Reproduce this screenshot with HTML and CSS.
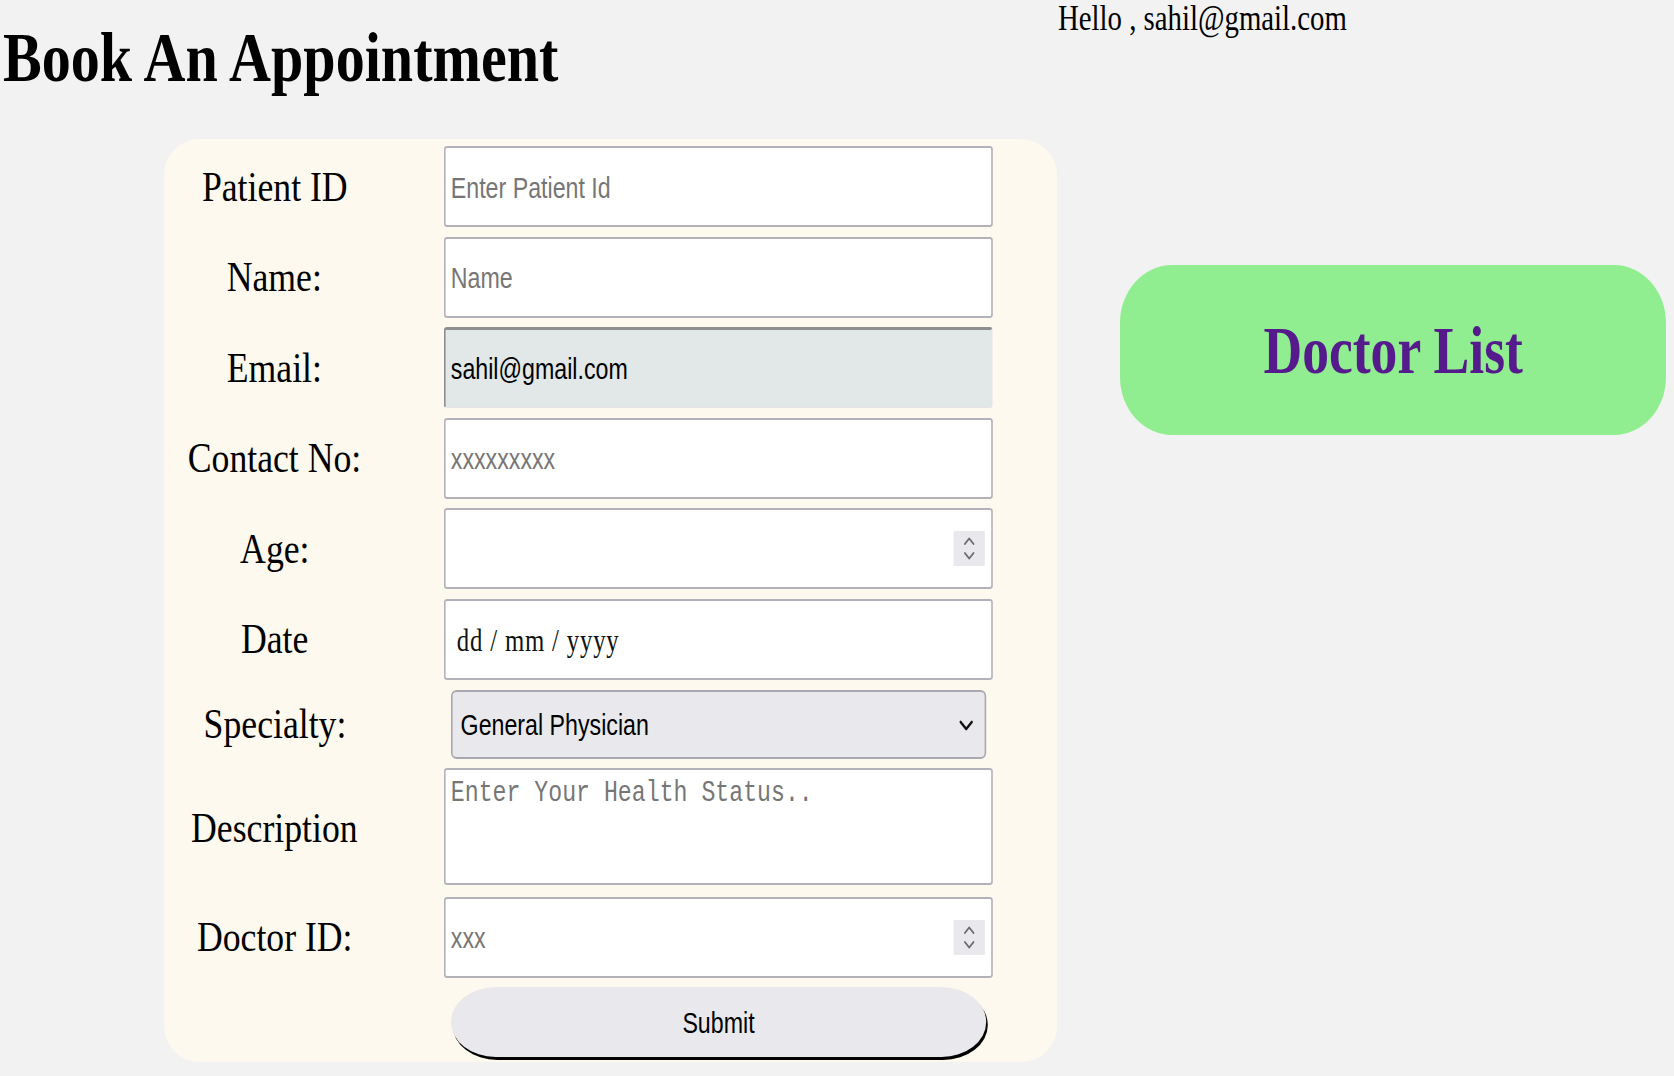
FILE: index.html
```html
<!DOCTYPE html>
<html lang="en">
<head>
<meta charset="utf-8">
<title>Book An Appointment</title>
<link rel="stylesheet" href="styles.css">
</head>
<body>
<div class="greet"><span class="greet-text">Hello , sahil@gmail.com</span></div>
<h1 class="title"><span class="title-text">Book An Appointment</span></h1>
<div class="main">
  <form class="card">
    <label class="lbl">Patient ID</label>
    <input class="field fx" type="text" placeholder="Enter Patient Id">

    <label class="lbl">Name:</label>
    <input class="field fx" type="text" placeholder="Name">

    <label class="lbl">Email:</label>
    <input class="field fx email" type="text" value="sahil@gmail.com">

    <label class="lbl">Contact No:</label>
    <input class="field fx" type="text" placeholder="xxxxxxxxx">

    <label class="lbl">Age:</label>
    <div class="numwrap fx">
      <input class="field" type="text">
      <span class="spin"><svg viewBox="0 0 39 35" width="39" height="35"><polyline points="14,13 19.5,7.5 25,13" /><polyline points="14,22 19.5,27.5 25,22" /></svg></span>
    </div>

    <label class="lbl">Date</label>
    <input class="field fx date" type="text" value="dd / mm / yyyy">

    <label class="lbl">Specialty:</label>
    <div class="selwrap fx">
      <select class="select">
        <option>General Physician</option>
      </select>
      <svg class="chev" viewBox="0 0 18 11" width="18" height="11"><polyline points="2,2 9,9 16,2" /></svg>
    </div>

    <label class="lbl">Description</label>
    <textarea class="area fx" placeholder="Enter Your Health Status.."></textarea>

    <label class="lbl">Doctor ID:</label>
    <div class="numwrap fx">
      <input class="field" type="text" placeholder="xxx">
      <span class="spin"><svg viewBox="0 0 39 35" width="39" height="35"><polyline points="14,13 19.5,7.5 25,13" /><polyline points="14,22 19.5,27.5 25,22" /></svg></span>
    </div>

    <span class="lbl"></span>
    <button class="submit fx" type="button">Submit</button>
  </form>
  <a class="doclist" href="#"><span class="doclist-text">Doctor List</span></a>
</div>
</body>
</html>
```

FILE: styles.css
```css
html, body {
  margin: 0;
  padding: 0;
  background: #f2f2f2;
}

body {
  font-family: "Liberation Serif", "Times New Roman", serif;
  color: #000;
}

/* the reference glyphs are horizontally condensed */
.greet {
  height: 36px;
  line-height: 36px;
  font-size: 36px;
  padding-left: 1058px;
}

.greet-text {
  display: inline-block;
  white-space: nowrap;
  transform: scaleX(0.8);
  transform-origin: 0 50%;
}

.title {
  margin: 0;
  font-size: 70px;
  line-height: 44px;
  font-weight: bold;
  padding-left: 3px;
}

.title-text {
  display: inline-block;
  white-space: nowrap;
  transform: scaleX(0.83);
  transform-origin: 0 50%;
}

.main {
  display: flex;
  align-items: flex-start;
  margin-top: 59px;
}

.card {
  flex-shrink: 0;
  margin: 0 0 0 164px;
  width: 893px;
  box-sizing: border-box;
  background: #fdf9ee;
  border-radius: 36px;
  padding: 7px 64px 5px 0;
  display: grid;
  grid-template-columns: 221px 549px;
  column-gap: 59px;
  row-gap: 9.6px;
}

.lbl {
  justify-self: center;
  align-self: center;
  white-space: nowrap;
  font-size: 43px;
  line-height: 50px;
  transform: scaleX(0.83);
}

/* fields are drawn at 125% width and condensed back to the column */
.fx {
  width: 125%;
  transform: scaleX(0.8);
  transform-origin: 0 0;
}

.field {
  display: block;
  height: 81px;
  box-sizing: border-box;
  margin: 0;
  border: 2px solid #b3b2ba;
  border-radius: 4px / 3px;
  background: #fff;
  padding: 3px 6.5px 0;
  font-family: "Liberation Sans", Arial, sans-serif;
  font-size: 29px;
  color: #000;
  outline: none;
}

.numwrap .field {
  width: 100%;
}

.field::placeholder,
.area::placeholder {
  color: #767676;
  opacity: 1;
}

.email {
  background: #e1e8e7;
  border-top: 3px solid #8e8e8e;
  border-left: 2px solid #8e8e8e;
  border-right: 2px solid #e4e4e9;
  border-bottom: 2px solid #e4e4e9;
}

.date {
  font-family: "Liberation Serif", "Times New Roman", serif;
  font-size: 31px;
  letter-spacing: 1px;
  padding-left: 14px;
  color: #111;
}

.numwrap {
  position: relative;
}

.spin {
  position: absolute;
  right: 10px;
  top: 23px;
  width: 39px;
  height: 35px;
  background: #e9e9ed;
  display: block;
}

.spin svg {
  display: block;
}

.spin polyline,
.chev polyline {
  fill: none;
  stroke: #6b6b6b;
  stroke-width: 1.8;
  stroke-linecap: round;
  stroke-linejoin: round;
}

.chev polyline {
  stroke: #111;
  stroke-width: 2.6;
}

.selwrap {
  position: relative;
  margin-left: 7px;
  width: calc(125% - 17.5px);
}

.select {
  display: block;
  width: 100%;
  height: 69px;
  box-sizing: border-box;
  margin: 0;
  appearance: none;
  -webkit-appearance: none;
  background: #e9e9ed;
  border: 2px solid #a9a8b0;
  border-radius: 7px / 6px;
  padding: 2px 10px 0;
  font-family: "Liberation Sans", Arial, sans-serif;
  font-size: 29px;
  color: #000;
  outline: none;
}

.chev {
  position: absolute;
  right: 16px;
  top: 30px;
}

.area {
  display: block;
  height: 117px;
  box-sizing: border-box;
  margin: 0 0 2px;
  border: 2px solid #b3b2ba;
  border-radius: 4px / 3px;
  background: #fff;
  padding: 7px 6.5px;
  font-family: "Liberation Mono", "Courier New", monospace;
  font-size: 29px;
  resize: none;
  outline: none;
}

.submit {
  display: block;
  margin: 0 0 0 7px;
  width: calc(125% - 17.5px);
  height: 70px;
  border: none;
  border-radius: 56px / 35px;
  background: #e9e9ed;
  box-shadow: 2px 3px 0 #000;
  font-family: "Liberation Sans", Arial, sans-serif;
  font-size: 29px;
  color: #000;
  padding: 2px 0 0;
}

.doclist {
  flex-shrink: 0;
  display: block;
  margin: 126px 0 0 63px;
  width: 546px;
  height: 170px;
  line-height: 170px;
  text-align: center;
  background: #90ee90;
  border-radius: 52px / 58px;
  color: #551a8b;
  font-size: 67px;
  font-weight: bold;
  text-decoration: none;
}

.doclist-text {
  display: inline-block;
  white-space: nowrap;
  transform: scaleX(0.8);
}
```
